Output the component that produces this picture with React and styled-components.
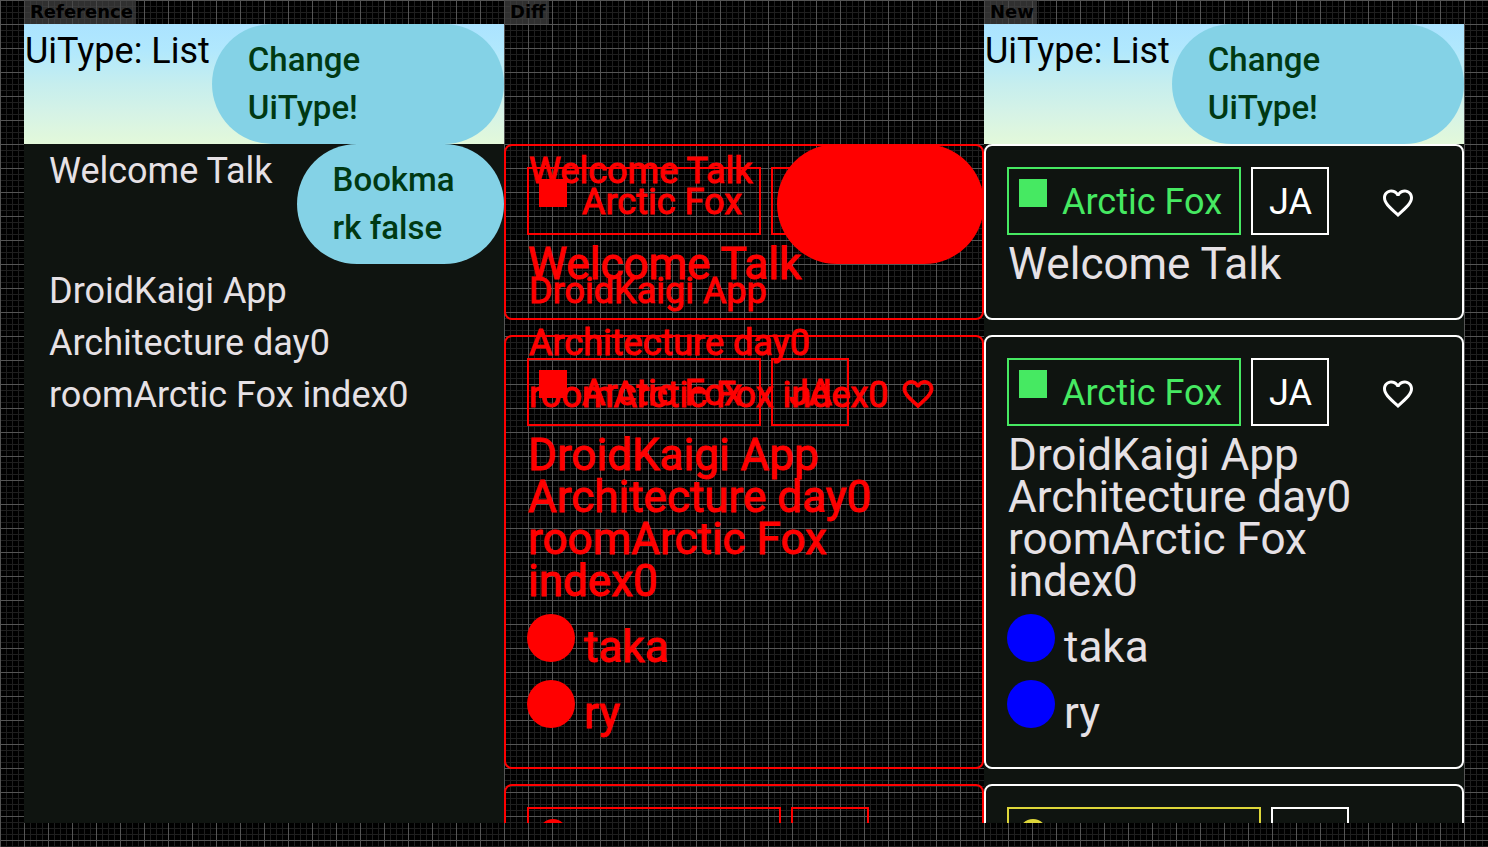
import React from "react";
import styled, { createGlobalStyle } from "styled-components";

const GlobalStyle = createGlobalStyle`
  * { box-sizing: border-box; }
  body {
    margin: 0;
    font-family: Roboto, "Liberation Sans", sans-serif;
    background-color: #000;
    background-image:
      linear-gradient(to right, #555 1px, transparent 1px),
      linear-gradient(to bottom, #555 1px, transparent 1px),
      linear-gradient(to right, #1f1f1f 1px, transparent 1px),
      linear-gradient(to bottom, #1f1f1f 1px, transparent 1px);
    background-size: 24px 24px, 24px 24px, 6px 6px, 6px 6px;
  }
`;

const Comparison = styled.main`
  display: grid;
  grid-template-columns: repeat(3, minmax(0, 1fr));
  height: 100vh;
  padding: 0 24px 24px;
`;

const Column = styled.section`
  display: flex;
  flex-direction: column;
  align-items: flex-start;
  min-height: 0;
`;

const Label = styled.h2`
  margin: 0;
  height: 24px;
  padding: 0 3px 0 6px;
  background: rgba(68, 68, 68, 0.7);
  color: #000;
  font: bold 18px/24px "DejaVu Sans", sans-serif;
`;

const Screen = styled.div`
  width: 100%;
  flex: 1;
  min-height: 0;
  overflow: hidden;
  background: ${(p) => (p.$diff ? "transparent" : "#0f1410")};
  ${(p) => p.$diff && "padding-top: 120px; -webkit-text-stroke: 1px #f00;"}
`;

const Layers = styled.div`
  display: grid;
  > * { grid-area: 1 / 1; min-width: 0; }
`;

const Header = styled.header`
  display: flex;
  align-items: flex-start;
  height: 120px;
  background: linear-gradient(#abe3ff, #b1e8fd 22%, #c6eeee 50%, #d6f3e6 75%, #e3f9da);
`;

const HeaderText = styled.p`
  flex: none;
  margin: 0;
  padding: 1px 2px 0 1px;
  font-size: 36px;
  line-height: 52px;
  color: #000;
`;

const PillButton = styled.button`
  flex: 1;
  min-width: 0;
  height: 120px;
  padding: 12px 36px;
  border: 0;
  border-radius: 60px;
  background: ${(p) => (p.$diff ? "#f00" : "#84d2e6")};
  color: ${(p) => (p.$diff ? "#f00" : "#003913")};
  font: 500 33px/48px Roboto, sans-serif;
  text-align: left;
  overflow-wrap: anywhere;
`;

const List = styled.ul`
  margin: 0;
  padding: 0;
  list-style: none;
`;

const ListRow = styled.li`
  display: flex;
  align-items: flex-start;
  color: ${(p) => (p.$diff ? "#f00" : "#e6e1e5")};
`;

const RowText = styled.span`
  flex: none;
  padding: 1px 24px 0 25px;
  font-size: 36px;
  line-height: 52px;
`;

const Cards = styled.div`
  display: flex;
  flex-direction: column;
  gap: 15px;
`;

const Card = styled.article`
  padding: 21px;
  border: 2px solid ${(p) => (p.$diff ? "#f00" : "#fff")};
  border-radius: 8px;
  color: ${(p) => (p.$diff ? "#f00" : "#e6e1e5")};
`;

const TagRow = styled.div`
  display: flex;
  gap: 10px;
`;

const Tag = styled.span`
  display: flex;
  height: 68px;
  padding: ${(p) => (p.$room ? "7px 17px 5px 10px" : "7px 15px 5px 16px")};
  gap: 15px;
  border: 2px solid currentColor;
  color: ${(p) => p.$color};
  font-size: 36px;
  line-height: 52px;
  white-space: nowrap;
`;

const Mark = styled.svg`
  flex: none;
  width: 28px;
  height: 28px;
  margin-top: 3px;
  fill: currentColor;
`;

const FavButton = styled.button`
  width: 72px;
  height: 72px;
  margin: 0 7px -4px auto;
  padding: 0;
  display: grid;
  place-items: center;
  border: 0;
  background: none;
  color: ${(p) => (p.$diff ? "#f00" : "#fff")};
`;

const Title = styled.h3`
  margin: 8px 0 12px;
  padding-left: 1px;
  font-weight: 400;
  font-size: 44px;
  line-height: 42px;
`;

const Speaker = styled.div`
  display: flex;
  height: 66px;
  gap: 9px;
  font-size: 44px;
  line-height: 66px;
`;

const Avatar = styled.span`
  width: 48px;
  height: 48px;
  border-radius: 50%;
  background: ${(p) => (p.$diff ? "#f00" : "#00f")};
`;

const sessions = [
  { title: "Welcome Talk", room: "Arctic Fox", color: "#46e962", speakers: [] },
  { title: "DroidKaigi App Architecture day0 roomArctic Fox index0", room: "Arctic Fox", color: "#46e962", speakers: ["taka", "ry"] },
  { title: "DroidKaigi App", room: "Bumblebee", color: "#ded73a", round: true, speakers: [] },
];

function AppHeader() {
  return (
    <Header>
      <HeaderText>UiType: List</HeaderText>
      <PillButton>Change<br />UiType!</PillButton>
    </Header>
  );
}

function TalkList({ diff }) {
  return (
    <List>
      <ListRow $diff={diff}>
        <RowText>Welcome Talk</RowText>
        <PillButton $diff={diff}>Bookma<wbr />rk false</PillButton>
      </ListRow>
      <ListRow $diff={diff}>
        <RowText>DroidKaigi App<br />Architecture day0<br />roomArctic Fox index0</RowText>
      </ListRow>
    </List>
  );
}

function TalkCards({ diff }) {
  return (
    <Cards>
      {sessions.map((s, i) => (
        <Card key={i} $diff={diff}>
          <TagRow>
            <Tag $room $color={diff ? "#f00" : s.color}>
              <Mark viewBox="0 0 28 28" aria-hidden="true">
                {s.round ? <circle cx="14" cy="14" r="14" /> : <rect width="28" height="28" />}
              </Mark>
              {s.room}
            </Tag>
            <Tag $color={diff ? "#f00" : "#fff"}>JA</Tag>
            <FavButton $diff={diff} aria-label="Bookmark">
              <svg width="36" height="36" viewBox="0 0 24 24" fill="currentColor" stroke="currentColor" strokeWidth={diff ? 0.6 : 0}>
                <path d="M16.5 3c-1.74 0-3.41.81-4.5 2.09C10.91 3.81 9.24 3 7.5 3 4.42 3 2 5.42 2 8.5c0 3.78 3.4 6.86 8.55 11.54L12 21.35l1.45-1.32C18.6 15.36 22 12.28 22 8.5 22 5.42 19.58 3 16.5 3zm-4.4 15.55l-.1.1-.1-.1C7.14 14.24 4 11.39 4 8.5 4 6.5 5.5 5 7.5 5c1.54 0 3.04.99 3.57 2.36h1.87C13.46 5.99 14.96 5 16.5 5c2 0 3.5 1.5 3.5 3.5 0 2.89-3.14 5.74-7.9 10.05z" />
              </svg>
            </FavButton>
          </TagRow>
          <Title>{s.title}</Title>
          {s.speakers.map((name) => (
            <Speaker key={name}>
              <Avatar $diff={diff} />
              {name}
            </Speaker>
          ))}
        </Card>
      ))}
    </Cards>
  );
}

export default function App() {
  return (
    <>
      <GlobalStyle />
      <Comparison>
        <Column>
          <Label>Reference</Label>
          <Screen><AppHeader /><TalkList /></Screen>
        </Column>
        <Column>
          <Label>Diff</Label>
          <Screen $diff>
            <Layers><TalkCards diff /><TalkList diff /></Layers>
          </Screen>
        </Column>
        <Column>
          <Label>New</Label>
          <Screen><AppHeader /><TalkCards /></Screen>
        </Column>
      </Comparison>
    </>
  );
}
